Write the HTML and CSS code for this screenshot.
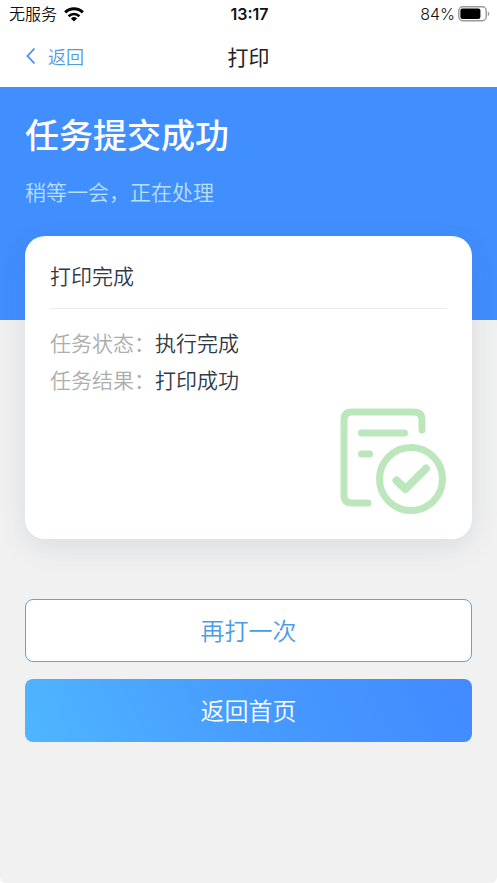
FILE: index.html
```html
<!DOCTYPE html>
<html lang="zh-CN">
<head>
<meta charset="utf-8">
<meta name="viewport" content="width=device-width, initial-scale=1">
<title>打印</title>
<link rel="stylesheet" href="styles.css">
</head>
<body>
<div class="screen">
  <div class="status">
    <div class="status-side">
      <span>无服务</span>
      <svg viewBox="0 0 20 15" width="20" height="15" aria-hidden="true">
        <path d="M1.2 5.4a12.6 12.6 0 0 1 17.6 0" fill="none" stroke="#000" stroke-width="3"/>
        <path d="M4.6 9.2a7.8 7.8 0 0 1 10.8 0" fill="none" stroke="#000" stroke-width="2.6"/>
        <path d="M10 14.6 6.9 11.5a4.5 4.5 0 0 1 6.2 0z"/>
      </svg>
    </div>
    <time class="clock">13:17</time>
    <div class="status-side status-right">
      <span>84%</span>
      <svg viewBox="0 0 32 16" width="32" height="16" aria-hidden="true">
        <rect x="0.8" y="0.8" width="27.4" height="14" rx="4" fill="#fff" stroke="#999" stroke-width="1.4"/>
        <rect x="2.4" y="2.6" width="20" height="10.4" rx="2"/>
        <path d="M29.8 5.6c2 .8 2 3.8 0 4.6z" fill="#999"/>
      </svg>
    </div>
  </div>
  <header class="nav">
    <a class="back" href="#">
      <svg viewBox="0 0 10 18" width="10" height="18" aria-hidden="true"><path d="M8.5 1.5 1.5 9l7 7.5" fill="none" stroke="#3f8ff0" stroke-width="1.8"/></svg>
      <span>返回</span>
    </a>
    <h1 class="nav-title">打印</h1>
  </header>
  <main>
    <section class="hero">
      <h2 class="hero-title">任务提交成功</h2>
      <p class="hero-text">稍等一会，正在处理</p>
    </section>
    <section class="card">
      <h3 class="card-title">打印完成</h3>
      <dl class="facts">
        <div class="fact"><dt>任务状态：</dt><dd>执行完成</dd></div>
        <div class="fact"><dt>任务结果：</dt><dd>打印成功</dd></div>
      </dl>
      <svg class="done" viewBox="0 0 107 107" width="107" height="107" fill="none" stroke="#bce7bc" stroke-width="7" stroke-linecap="round" stroke-linejoin="round" aria-hidden="true">
        <path d="M82 22V12q0-8-8-8H12q-8 0-8 8v75q0 8 8 8h16"/>
        <path d="M21.500 25h43M21.500 46h8"/>
        <circle cx="71" cy="71" r="31.5"/>
        <path d="m56.500 72.500 9 8.500L86 60.500" stroke-width="8"/>
      </svg>
    </section>
    <div class="actions">
      <button class="btn btn-outline" type="button">再打一次</button>
      <button class="btn btn-primary" type="button">返回首页</button>
    </div>
  </main>
</div>
</body>
</html>
```
FILE: styles.css
```css
* {
  box-sizing: border-box;
}

body {
  margin: 0;
  background: #fff;
  font-family: "Noto Sans CJK SC", sans-serif;
  font-weight: 350;
  color: #303a46;
}

h1, h2, h3, p, dl, dd {
  margin: 0;
}

.screen {
  min-height: 100vh;
  background: #f1f1f1;
  border-radius: 0 0 6px 6px;
  overflow: hidden;
}

.status {
  display: grid;
  grid-template-columns: 1fr auto 1fr;
  align-items: center;
  height: 28px;
  padding: 0 7px 0 9px;
  background: #fff;
  color: #111;
  font-family: "Inter", "Noto Sans CJK SC", sans-serif;
  font-size: 16px;
  line-height: 28px;
}

.status-side {
  display: flex;
  align-items: center;
  gap: 7px;
}

.status-right {
  justify-content: flex-end;
  gap: 3px;
}

.clock {
  font-weight: 600;
}

.nav {
  display: grid;
  grid-template-columns: 1fr auto 1fr;
  align-items: center;
  padding: 12px 26px 15px;
  background: #fff;
}

.back {
  display: flex;
  align-items: center;
  gap: 12px;
  color: #4b9be6;
  font-size: 18px;
  line-height: 28px;
  text-decoration: none;
}

.nav-title {
  color: #222;
  font-size: 21px;
  font-weight: 400;
  line-height: 32px;
}

.hero {
  padding: 21px 25px 113px;
  background: #418eff;
  color: #fff;
}

.hero-title {
  font-size: 34px;
  font-weight: 500;
  line-height: 52px;
}

.hero-text {
  margin-top: 15px;
  color: #b9e0fb;
  font-size: 21px;
  line-height: 32px;
}

.card {
  display: flex;
  flex-direction: column;
  margin: -84px 25px 0;
  padding: 23px 25px 24px;
  border-radius: 20px;
  background: #fff;
  box-shadow: 0 8px 28px rgba(60, 75, 100, 0.12);
}

.card-title {
  padding-bottom: 17px;
  border-bottom: 1px solid #ebebeb;
  font-size: 21px;
  font-weight: 350;
  line-height: 32px;
}

.facts {
  padding-top: 15px;
  font-size: 21px;
  line-height: 37px;
}

.fact {
  display: flex;
}

.fact dt {
  color: #adadad;
}

.done {
  align-self: flex-end;
  margin-top: 10px;
}

.actions {
  display: flex;
  flex-direction: column;
  gap: 17px;
  padding: 60px 25px 0;
}

.btn {
  height: 63px;
  padding: 0 16px 2px;
  border: 0;
  border-radius: 8px;
  font-family: inherit;
  font-size: 24px;
  font-weight: 350;
}

.btn-outline {
  border: 1px solid #58a8d8;
  background: #fff;
  color: #4b9be6;
}

.btn-primary {
  background: linear-gradient(65deg, #4fb6ff, #4699ff 55%, #418aff);
  color: #fff;
}
```
